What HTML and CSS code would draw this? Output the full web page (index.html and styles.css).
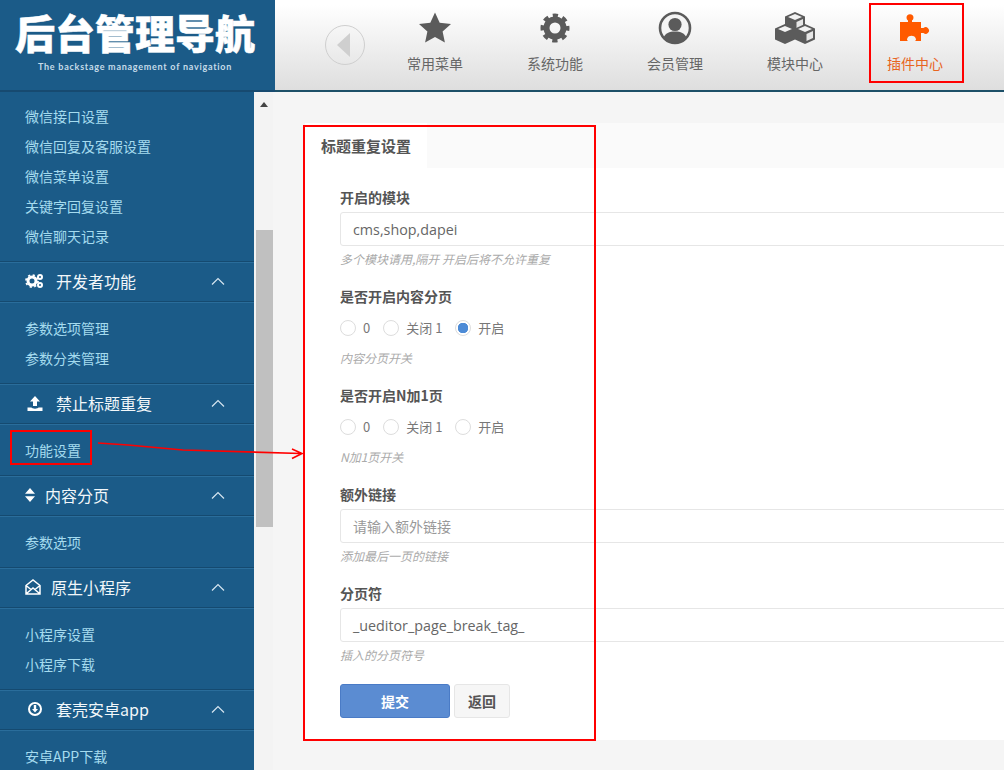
FILE: index.html
```html
<!DOCTYPE html>
<html lang="zh">
<head>
<meta charset="utf-8">
<title>后台管理导航</title>
<link rel="stylesheet" href="styles.css">
</head>
<body>
<div class="app">
  <header class="top">
    <div class="logo">
      <div class="logo-title">后台管理导航</div>
      <div class="logo-sub">The backstage management of navigation</div>
    </div>
    <nav class="topnav">
      <div class="back">
        <svg width="14" height="24" viewBox="0 0 14 24"><path d="M13 0v24L0 12z" fill="#cfcfcf"/></svg>
      </div>
      <a class="tn">
        <svg class="tn-ico" width="34" height="34" viewBox="0 0 34 34"><path d="M17 1.500l4.700 10.300 11.300 1.200-8.400 7.500 2.300 11.100L17 26.100 7.100 31.600l2.300-11.100L1 13l11.300-1.200z" fill="#5b5b5b"/></svg>
        <span>常用菜单</span>
      </a>
      <a class="tn">
        <svg class="tn-ico" width="34" height="34" viewBox="0 0 34 34"><circle cx="17" cy="17" r="8.500" fill="none" stroke="#5b5b5b" stroke-width="6"/><circle cx="17" cy="17" r="12.500" fill="none" stroke="#5b5b5b" stroke-width="4" stroke-dasharray="5.200 4.617" stroke-dashoffset="2.600"/></svg>
        <span>系统功能</span>
      </a>
      <a class="tn">
        <svg class="tn-ico" width="34" height="34" viewBox="0 0 34 34"><circle cx="17" cy="17" r="15" fill="#f4f4f4" stroke="#5b5b5b" stroke-width="2.600"/><circle cx="17" cy="13.500" r="6.600" fill="#5b5b5b"/><path d="M5.500 27c1.500-5 6-6.500 11.500-6.500S27 22 28.500 27C25.500 30.500 21.500 32 17 32S8.500 30.500 5.500 27z" fill="#5b5b5b"/></svg>
        <span>会员管理</span>
      </a>
      <a class="tn">
        <svg class="tn-ico" width="42" height="34" viewBox="0 0 42 34">
          <path d="M21 1l10 4.500v11L21 21l-10-4.500v-11z" fill="#5b5b5b"/><path d="M21 3l7 3-7 3-7-3z" fill="#f2f2f2"/><path d="M22.500 11l6.500-3v7l-6.500 3z" fill="#e6e6e6"/>
          <path d="M11 13l10 4.500v11L11 33 1 28.500v-11z" fill="#5b5b5b"/><path d="M11 15l7 3-7 3-7-3z" fill="#f2f2f2"/>
          <path d="M31 13l10 4.500v11L31 33l-10-4.500v-11z" fill="#5b5b5b"/><path d="M31 15l7 3-7 3-7-3z" fill="#f2f2f2"/><path d="M32.500 23l6.500-3v7l-6.500 3z" fill="#e6e6e6"/>
        </svg>
        <span>模块中心</span>
      </a>
      <a class="tn on">
        <svg class="tn-ico" width="34" height="34" viewBox="0 0 34 34"><path d="M2 11H10V9.500a3.500 3.500 0 1 1 4 0V11h9v6h2.500a3.300 3.300 0 1 1 0 5H23v8h-6c1.500-1 1-2 .5-3-1-3-7-3-8 0-.5 1-1 2 .5 3H2z" fill="#ff5a00"/></svg>
        <span>插件中心</span>
      </a>
    </nav>
  </header>

  <div class="body">
    <aside class="side">
      <ul class="links first">
        <li>微信接口设置</li><li>微信回复及客服设置</li><li>微信菜单设置</li><li>关键字回复设置</li><li>微信聊天记录</li>
      </ul>
      <div class="group">
        <svg class="gi" width="20" height="16" viewBox="0 0 20 16"><circle cx="7" cy="8" r="4" fill="none" stroke="#fff" stroke-width="3"/><circle cx="7" cy="8" r="6" fill="none" stroke="#fff" stroke-width="1.800" stroke-dasharray="2.200 2.510"/><circle cx="15" cy="4" r="2" fill="none" stroke="#fff" stroke-width="2"/><circle cx="15" cy="12" r="2" fill="none" stroke="#fff" stroke-width="2"/></svg>
        <span class="gt">开发者功能</span>
        <svg class="chev" width="14" height="8" viewBox="0 0 14 8"><path d="M1 7.500l6-6 6 6" fill="none" stroke="#d6e6f0" stroke-width="1.200"/></svg>
      </div>
      <ul class="links">
        <li>参数选项管理</li><li>参数分类管理</li>
      </ul>
      <div class="group">
        <svg class="gi" width="20" height="16" viewBox="0 0 20 16"><path d="M10 1l5 5.500h-3V11H8V6.500H5zM2.500 12.500H6.500c.5 1.500 6.500 1.500 7 0h4V16h-15z" fill="#fff"/></svg>
        <span class="gt">禁止标题重复</span>
        <svg class="chev" width="14" height="8" viewBox="0 0 14 8"><path d="M1 7.500l6-6 6 6" fill="none" stroke="#d6e6f0" stroke-width="1.200"/></svg>
      </div>
      <ul class="links">
        <li>功能设置</li>
      </ul>
      <div class="group">
        <svg class="gi gi-sm" width="10" height="14" viewBox="0 0 10 14"><path d="M5 0l5 5.800H0zM5 14L0 8.200h10z" fill="#fff"/></svg>
        <span class="gt">内容分页</span>
        <svg class="chev" width="14" height="8" viewBox="0 0 14 8"><path d="M1 7.500l6-6 6 6" fill="none" stroke="#d6e6f0" stroke-width="1.200"/></svg>
      </div>
      <ul class="links">
        <li>参数选项</li>
      </ul>
      <div class="group">
        <svg class="gi gi-md" width="16" height="16" viewBox="0 0 16 16"><path d="M1 6.500L8 1l7 5.500V15H1zM1 6.500L6 10.500M15 6.500L10 10.500M1.500 14.500L8 9l6.500 5.500" fill="none" stroke="#fff" stroke-width="1.500"/></svg>
        <span class="gt">原生小程序</span>
        <svg class="chev" width="14" height="8" viewBox="0 0 14 8"><path d="M1 7.500l6-6 6 6" fill="none" stroke="#d6e6f0" stroke-width="1.200"/></svg>
      </div>
      <ul class="links">
        <li>小程序设置</li><li>小程序下载</li>
      </ul>
      <div class="group">
        <svg class="gi" width="20" height="16" viewBox="0 0 20 16"><circle cx="10" cy="8" r="6" fill="none" stroke="#fff" stroke-width="2"/><path d="M8.800 4h2.400v4H13l-3 3.500L7 8h1.800z" fill="#fff"/></svg>
        <span class="gt">套壳安卓app</span>
        <svg class="chev" width="14" height="8" viewBox="0 0 14 8"><path d="M1 7.500l6-6 6 6" fill="none" stroke="#d6e6f0" stroke-width="1.200"/></svg>
      </div>
      <ul class="links">
        <li>安卓APP下载</li>
      </ul>
    </aside>

    <div class="scroll">
      <div class="scroll-up"></div>
      <div class="scroll-thumb"></div>
    </div>

    <main class="main">
      <section class="card">
        <div class="tabs"><div class="tab">标题重复设置</div></div>
        <form class="form">
          <div class="field">
            <label class="lbl">开启的模块</label>
            <div class="input">cms,shop,dapei</div>
            <div class="help">多个模块请用,隔开 开启后将不允许重复</div>
          </div>
          <div class="field">
            <label class="lbl">是否开启内容分页</label>
            <div class="radios">
              <span class="radio"></span><span class="rt">0</span>
              <span class="radio"></span><span class="rt">关闭 1</span>
              <span class="radio checked"></span><span class="rt">开启</span>
            </div>
            <div class="help">内容分页开关</div>
          </div>
          <div class="field">
            <label class="lbl">是否开启N加1页</label>
            <div class="radios">
              <span class="radio"></span><span class="rt">0</span>
              <span class="radio"></span><span class="rt">关闭 1</span>
              <span class="radio"></span><span class="rt">开启</span>
            </div>
            <div class="help">N加1页开关</div>
          </div>
          <div class="field">
            <label class="lbl">额外链接</label>
            <div class="input ph">请输入额外链接</div>
            <div class="help">添加最后一页的链接</div>
          </div>
          <div class="field">
            <label class="lbl">分页符</label>
            <div class="input">_ueditor_page_break_tag_</div>
            <div class="help">插入的分页符号</div>
          </div>
          <div class="btns">
            <button type="button" class="btn primary">提交</button>
            <button type="button" class="btn">返回</button>
          </div>
        </form>
      </section>
    </main>
  </div>

  <div class="mark mark-nav"></div>
  <div class="mark mark-link"></div>
  <div class="mark mark-form"></div>
  <svg class="mark-arrow" width="210" height="20" viewBox="0 0 210 20"><path d="M0 3l30 2 55 5 118 3.500M194 9l10 4.500-10 5" fill="none" stroke="#f00" stroke-width="1.600"/></svg>
</div>
</body>
</html>
```
FILE: styles.css
```css
* { box-sizing: border-box; }
html, body { margin: 0; padding: 0; height: 100%; overflow: hidden; }
body { font-family: "Noto Sans CJK SC", "Noto Sans", sans-serif; color: #555; background: #f5f5f5; }
ul { margin: 0; padding: 0; list-style: none; }

.app { position: relative; width: 1004px; height: 770px; display: flex; flex-direction: column; overflow: hidden; }

.top { height: 92px; flex: none; display: flex; background: linear-gradient(#fff 5%, #dedede 100%); border-bottom: 2px solid #1d5068; }
.logo { width: 275px; height: 92px; flex: none; background: #1b5b88; border-bottom: 2px solid #174a70; padding-left: 15px; }
.logo-title { margin-top: 9px; font-size: 40px; line-height: 46px; font-weight: 900; color: #fff; white-space: nowrap; -webkit-text-stroke: .5px #fff; }
.logo-sub { margin: 5px 0 0 23px; font: 700 9px/14px "Lato", sans-serif; color: #c6dbe8; letter-spacing: .74px; white-space: nowrap; }

.topnav { display: flex; padding-left: 50px; }
.back { width: 40px; height: 40px; margin: 25px 10px 0 0; border: 1px solid #cfcfcf; border-radius: 50%; display: flex; align-items: center; justify-content: center; padding-right: 3px; }
.tn { width: 120px; display: flex; flex-direction: column; align-items: center; font-size: 14px; line-height: 20px; color: #666; padding-top: 11px; }
.tn-ico { display: block; height: 34px; margin-bottom: 8px; }
.tn.on { color: #e8651f; }

.body { flex: 1; display: flex; min-height: 0; }
.side { width: 254px; flex: none; background: #1b5b88; overflow: hidden; }
.links { padding: 10px 0; font-size: 14px; line-height: 30px; color: #a5dbef; }
.links.first { padding-top: 9px; }
.links li { padding-left: 25px; white-space: nowrap; }
.group { height: 42px; display: flex; align-items: center; padding: 0 29px 2px 25px; color: #f2f7fa; font-size: 16px; border-top: 1px solid #154a70; border-bottom: 1px solid #2a6d9b; box-shadow: inset 0 1px 0 #2a6d9b, inset 0 -1px 0 #154a70; }
.gi { flex: none; margin-right: 11px; }
.gi-sm { margin-right: 10px; }
.gi-md { margin-right: 10px; }
.gt { flex: 1; white-space: nowrap; }
.chev { flex: none; }

.scroll { width: 19px; flex: none; background: #f3f3f3; padding: 10px 0 0 2px; }
.scroll-up { width: 0; height: 0; margin-left: 4px; border: 4.500px solid transparent; border-top: 0; border-bottom: 5px solid #444; }
.scroll-thumb { width: 17px; height: 297px; margin-top: 123px; background: #c0c0c0; }

.main { flex: 1; min-width: 0; padding: 31px 0 0 32px; background: #f5f5f5; }
.card { width: 800px; height: 617px; background: #fff; }
.tabs { height: 45px; background: #fafafa; }
.tab { width: 122px; height: 45px; background: #fff; padding-left: 16px; font-size: 15px; font-weight: 700; line-height: 45px; color: #555; white-space: nowrap; }
.form { padding: 20px 0 0 35px; }
.field { margin-bottom: 18px; }
.lbl { display: block; font-size: 14px; font-weight: 700; line-height: 18px; color: #555; margin-bottom: 6px; }
.input { width: 760px; height: 34px; border: 1px solid #e6e6e6; border-radius: 3px; padding-left: 12px; font: 14.300px/34px "Open Sans", "Noto Sans CJK SC", sans-serif; color: #666; background: #fff; }
.input.ph { color: #999; font: 14px/32px "Noto Sans CJK SC", sans-serif; }
.help { margin-top: 3px; font-size: 12px; line-height: 20px; font-style: italic; color: #aaa; white-space: nowrap; }
.radios { height: 34px; display: flex; align-items: center; font-size: 13px; color: #777; }
.radio { width: 16px; height: 16px; border: 1px solid #ddd; border-radius: 50%; background: #fff; flex: none; }
.radio.checked { background: radial-gradient(circle, #4d8bd6 0 5px, #fff 5.500px); }
.rt { margin: 0 13px 0 7px; padding-bottom: 2px; }
.btns { display: flex; gap: 4px; margin-top: 19px; }
.btn { height: 34px; width: 56px; padding: 0; border: 1px solid #e6e6e6; border-radius: 3px; background: #f6f6f6; font: 700 14px "Noto Sans CJK SC", sans-serif; color: #555; }
.btn.primary { width: 110px; background: #5b8cd2; border-color: #4a7bc6; color: #fff; }

.mark { position: absolute; border: 2px solid #f00; pointer-events: none; }
.mark-nav { left: 869px; top: 3px; width: 95px; height: 80px; }
.mark-link { left: 10px; top: 430px; width: 82px; height: 35px; }
.mark-form { left: 303px; top: 125px; width: 293px; height: 616px; }
.mark-arrow { position: absolute; left: 98px; top: 440px; }
```
